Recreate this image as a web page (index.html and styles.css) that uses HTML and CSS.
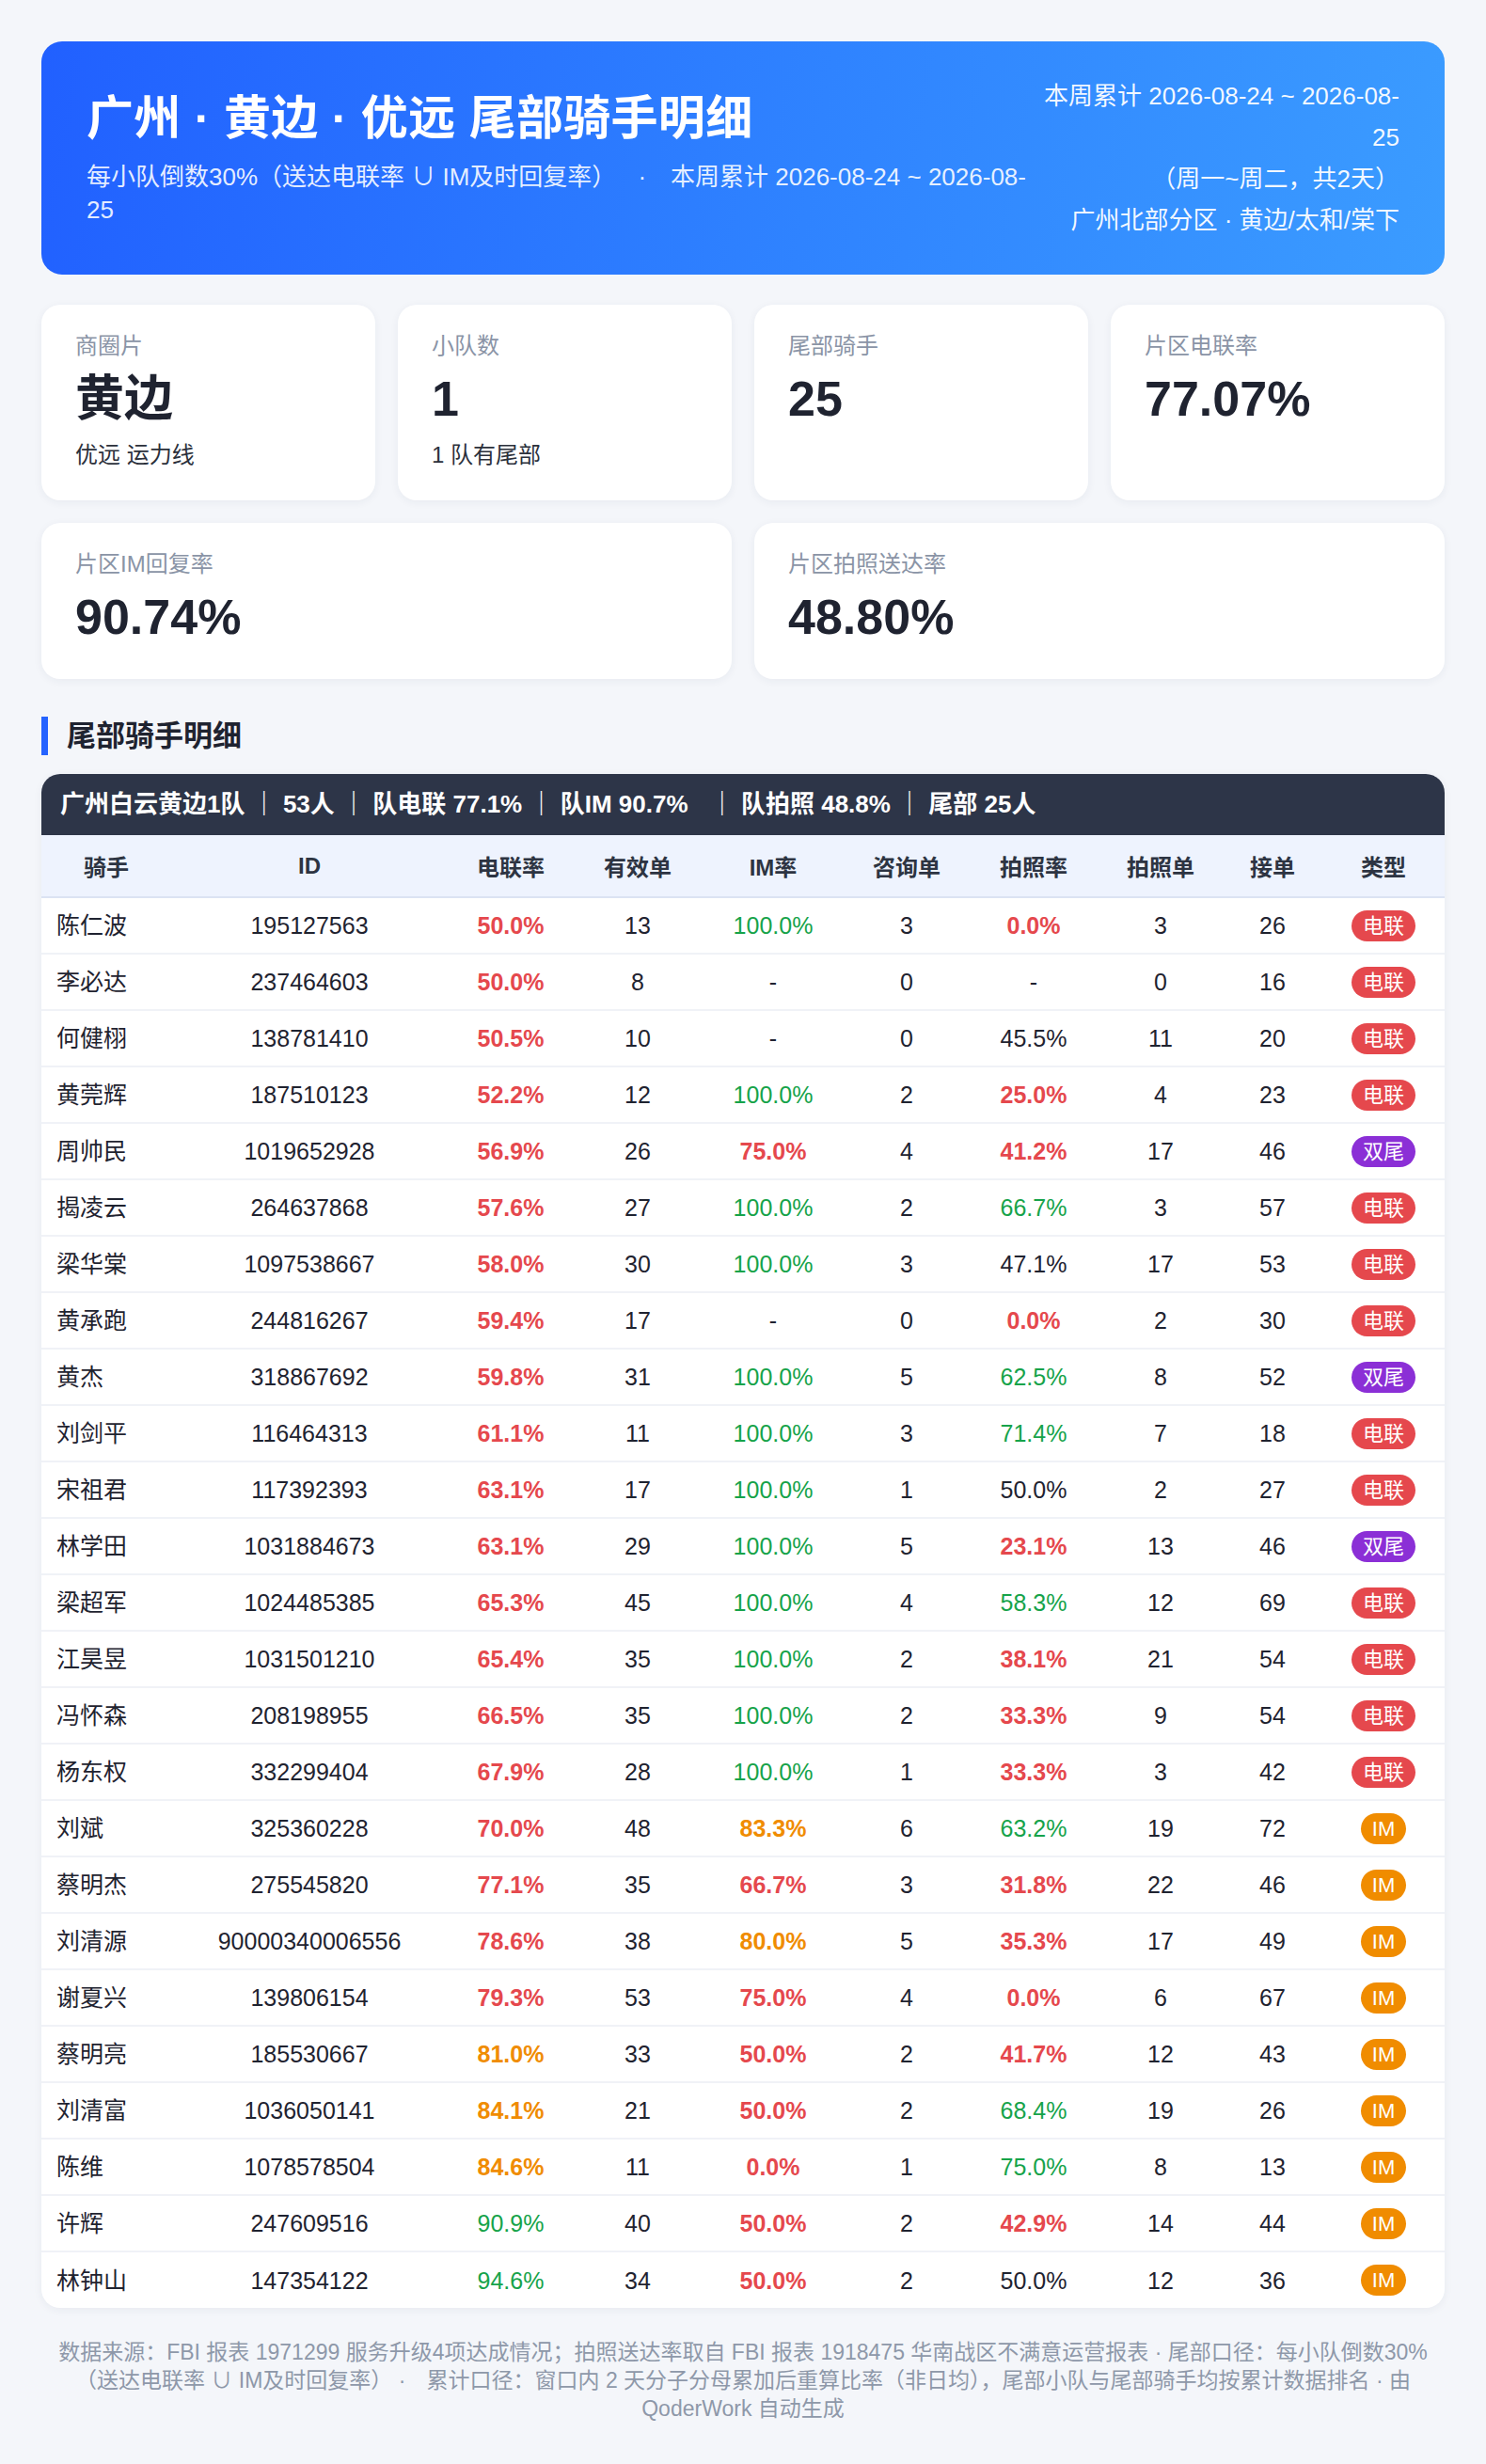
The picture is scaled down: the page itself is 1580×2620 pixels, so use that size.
FILE: index.html
```html
<!DOCTYPE html>
<html lang="zh-CN">
<head>
<meta charset="utf-8">
<title>广州 · 黄边 · 优远 尾部骑手明细</title>
<link rel="stylesheet" href="styles.css">
</head>
<body>
<div class="page">
  <header class="banner">
    <div class="banner-left">
      <h1 class="title">广州 · 黄边 · 优远 尾部骑手明细</h1>
      <p class="subtitle">每小队倒数30%（送达电联率 ∪ IM及时回复率）<span class="sep">·</span>本周累计 2026-08-24 ~ 2026-08-25</p>
    </div>
    <div class="banner-right">
      <div>本周累计 2026-08-24 ~ 2026-08-25</div>
      <div>（周一~周二，共2天）</div>
      <div>广州北部分区 · 黄边/太和/棠下</div>
    </div>
  </header>

  <section class="stats4">
    <div class="card">
      <div class="label">商圈片</div>
      <div class="value">黄边</div>
      <div class="sub">优远 运力线</div>
    </div>
    <div class="card">
      <div class="label">小队数</div>
      <div class="value">1</div>
      <div class="sub">1 队有尾部</div>
    </div>
    <div class="card">
      <div class="label">尾部骑手</div>
      <div class="value">25</div>
    </div>
    <div class="card">
      <div class="label">片区电联率</div>
      <div class="value">77.07%</div>
    </div>
  </section>
  <section class="stats2">
    <div class="card">
      <div class="label">片区IM回复率</div>
      <div class="value">90.74%</div>
    </div>
    <div class="card">
      <div class="label">片区拍照送达率</div>
      <div class="value">48.80%</div>
    </div>
  </section>

  <h2 class="section-title">尾部骑手明细</h2>

  <div class="table-card">
    <div class="team-bar">广州白云黄边1队 ｜ 53人 ｜ 队电联 77.1% ｜ 队IM 90.7%<span class="gap"></span> ｜ 队拍照 48.8% ｜ 尾部 25人</div>
    <table class="riders">
      <colgroup>
        <col class="c1"><col class="c2"><col class="c3"><col class="c4"><col class="c5">
        <col class="c6"><col class="c7"><col class="c8"><col class="c9"><col class="c10">
      </colgroup>
      <thead>
        <tr><th>骑手</th><th>ID</th><th>电联率</th><th>有效单</th><th>IM率</th><th>咨询单</th><th>拍照率</th><th>拍照单</th><th>接单</th><th>类型</th></tr>
      </thead>
      <tbody>
        <tr><td class="name">陈仁波</td><td>195127563</td><td class="r">50.0%</td><td>13</td><td class="g">100.0%</td><td>3</td><td class="r">0.0%</td><td>3</td><td>26</td><td><span class="badge tel">电联</span></td></tr>
        <tr><td class="name">李必达</td><td>237464603</td><td class="r">50.0%</td><td>8</td><td>-</td><td>0</td><td>-</td><td>0</td><td>16</td><td><span class="badge tel">电联</span></td></tr>
        <tr><td class="name">何健栩</td><td>138781410</td><td class="r">50.5%</td><td>10</td><td>-</td><td>0</td><td>45.5%</td><td>11</td><td>20</td><td><span class="badge tel">电联</span></td></tr>
        <tr><td class="name">黄莞辉</td><td>187510123</td><td class="r">52.2%</td><td>12</td><td class="g">100.0%</td><td>2</td><td class="r">25.0%</td><td>4</td><td>23</td><td><span class="badge tel">电联</span></td></tr>
        <tr><td class="name">周帅民</td><td>1019652928</td><td class="r">56.9%</td><td>26</td><td class="r">75.0%</td><td>4</td><td class="r">41.2%</td><td>17</td><td>46</td><td><span class="badge dual">双尾</span></td></tr>
        <tr><td class="name">揭凌云</td><td>264637868</td><td class="r">57.6%</td><td>27</td><td class="g">100.0%</td><td>2</td><td class="g">66.7%</td><td>3</td><td>57</td><td><span class="badge tel">电联</span></td></tr>
        <tr><td class="name">梁华棠</td><td>1097538667</td><td class="r">58.0%</td><td>30</td><td class="g">100.0%</td><td>3</td><td>47.1%</td><td>17</td><td>53</td><td><span class="badge tel">电联</span></td></tr>
        <tr><td class="name">黄承跑</td><td>244816267</td><td class="r">59.4%</td><td>17</td><td>-</td><td>0</td><td class="r">0.0%</td><td>2</td><td>30</td><td><span class="badge tel">电联</span></td></tr>
        <tr><td class="name">黄杰</td><td>318867692</td><td class="r">59.8%</td><td>31</td><td class="g">100.0%</td><td>5</td><td class="g">62.5%</td><td>8</td><td>52</td><td><span class="badge dual">双尾</span></td></tr>
        <tr><td class="name">刘剑平</td><td>116464313</td><td class="r">61.1%</td><td>11</td><td class="g">100.0%</td><td>3</td><td class="g">71.4%</td><td>7</td><td>18</td><td><span class="badge tel">电联</span></td></tr>
        <tr><td class="name">宋祖君</td><td>117392393</td><td class="r">63.1%</td><td>17</td><td class="g">100.0%</td><td>1</td><td>50.0%</td><td>2</td><td>27</td><td><span class="badge tel">电联</span></td></tr>
        <tr><td class="name">林学田</td><td>1031884673</td><td class="r">63.1%</td><td>29</td><td class="g">100.0%</td><td>5</td><td class="r">23.1%</td><td>13</td><td>46</td><td><span class="badge dual">双尾</span></td></tr>
        <tr><td class="name">梁超军</td><td>1024485385</td><td class="r">65.3%</td><td>45</td><td class="g">100.0%</td><td>4</td><td class="g">58.3%</td><td>12</td><td>69</td><td><span class="badge tel">电联</span></td></tr>
        <tr><td class="name">江昊昱</td><td>1031501210</td><td class="r">65.4%</td><td>35</td><td class="g">100.0%</td><td>2</td><td class="r">38.1%</td><td>21</td><td>54</td><td><span class="badge tel">电联</span></td></tr>
        <tr><td class="name">冯怀森</td><td>208198955</td><td class="r">66.5%</td><td>35</td><td class="g">100.0%</td><td>2</td><td class="r">33.3%</td><td>9</td><td>54</td><td><span class="badge tel">电联</span></td></tr>
        <tr><td class="name">杨东权</td><td>332299404</td><td class="r">67.9%</td><td>28</td><td class="g">100.0%</td><td>1</td><td class="r">33.3%</td><td>3</td><td>42</td><td><span class="badge tel">电联</span></td></tr>
        <tr><td class="name">刘斌</td><td>325360228</td><td class="r">70.0%</td><td>48</td><td class="o">83.3%</td><td>6</td><td class="g">63.2%</td><td>19</td><td>72</td><td><span class="badge im">IM</span></td></tr>
        <tr><td class="name">蔡明杰</td><td>275545820</td><td class="r">77.1%</td><td>35</td><td class="r">66.7%</td><td>3</td><td class="r">31.8%</td><td>22</td><td>46</td><td><span class="badge im">IM</span></td></tr>
        <tr><td class="name">刘清源</td><td>90000340006556</td><td class="r">78.6%</td><td>38</td><td class="o">80.0%</td><td>5</td><td class="r">35.3%</td><td>17</td><td>49</td><td><span class="badge im">IM</span></td></tr>
        <tr><td class="name">谢夏兴</td><td>139806154</td><td class="r">79.3%</td><td>53</td><td class="r">75.0%</td><td>4</td><td class="r">0.0%</td><td>6</td><td>67</td><td><span class="badge im">IM</span></td></tr>
        <tr><td class="name">蔡明亮</td><td>185530667</td><td class="o">81.0%</td><td>33</td><td class="r">50.0%</td><td>2</td><td class="r">41.7%</td><td>12</td><td>43</td><td><span class="badge im">IM</span></td></tr>
        <tr><td class="name">刘清富</td><td>1036050141</td><td class="o">84.1%</td><td>21</td><td class="r">50.0%</td><td>2</td><td class="g">68.4%</td><td>19</td><td>26</td><td><span class="badge im">IM</span></td></tr>
        <tr><td class="name">陈维</td><td>1078578504</td><td class="o">84.6%</td><td>11</td><td class="r">0.0%</td><td>1</td><td class="g">75.0%</td><td>8</td><td>13</td><td><span class="badge im">IM</span></td></tr>
        <tr><td class="name">许辉</td><td>247609516</td><td class="g">90.9%</td><td>40</td><td class="r">50.0%</td><td>2</td><td class="r">42.9%</td><td>14</td><td>44</td><td><span class="badge im">IM</span></td></tr>
        <tr><td class="name">林钟山</td><td>147354122</td><td class="g">94.6%</td><td>34</td><td class="r">50.0%</td><td>2</td><td>50.0%</td><td>12</td><td>36</td><td><span class="badge im">IM</span></td></tr>
      </tbody>
    </table>
  </div>

  <footer class="footer">数据来源：FBI 报表 1971299 服务升级4项达成情况；拍照送达率取自 FBI 报表 1918475 华南战区不满意运营报表 · 尾部口径：每小队倒数30%（送达电联率 ∪ IM及时回复率）<span class="sep2">·</span>累计口径：窗口内 2 天分子分母累加后重算比率（非日均），尾部小队与尾部骑手均按累计数据排名 · 由 QoderWork 自动生成</footer>
</div>
</body>
</html>
```

FILE: styles.css
```css
* { box-sizing: border-box; }

html, body {
  margin: 0;
  padding: 0;
  background: #f4f6fa;
}

body {
  font-family: "Liberation Sans", "Noto Sans CJK SC", sans-serif;
  color: #1f2430;
}

.page {
  padding: 44px;
}

/* Banner */
.banner {
  display: flex;
  justify-content: space-between;
  align-items: center;
  padding: 36px 48px;
  min-height: 248px;
  border-radius: 22px;
  background: linear-gradient(100deg, #2160ff 0%, #2f83ff 55%, #3b9cff 100%);
  color: #ffffff;
}

.banner-left {
  width: 1004px;
  flex: none;
}

.title {
  margin: 0;
  font-size: 50px;
  line-height: 60px;
  font-weight: 700;
  letter-spacing: 0.3px;
}

.subtitle {
  margin: 15px 0 0;
  font-size: 26px;
  line-height: 35px;
  color: rgba(255, 255, 255, 0.9);
}

.sep {
  margin: 0 26px 0 36px;
}

.banner-right {
  width: 390px;
  flex: none;
  text-align: right;
  font-size: 26px;
  line-height: 44px;
  color: rgba(255, 255, 255, 0.95);
}

/* Stat cards */
.stats4 {
  display: grid;
  grid-template-columns: repeat(4, 1fr);
  gap: 24px;
  margin-top: 32px;
}

.stats2 {
  display: grid;
  grid-template-columns: repeat(2, 1fr);
  gap: 24px;
  margin-top: 24px;
}

.stats2 .card {
  min-height: 166px;
}

.card {
  background: #ffffff;
  border-radius: 20px;
  padding: 28px 36px 30px;
  box-shadow: 0 2px 10px rgba(30, 45, 80, 0.06);
}

.label {
  font-size: 24px;
  line-height: 32px;
  color: #8a94a6;
}

.value {
  margin-top: 8px;
  font-size: 52px;
  line-height: 64px;
  font-weight: 700;
  color: #1f2330;
}

.sub {
  margin-top: 10px;
  font-size: 24px;
  line-height: 36px;
  color: #2b303b;
}

/* Section title */
.section-title {
  margin: 40px 0 20px;
  padding-left: 20px;
  border-left: 7px solid #2563ff;
  font-size: 31px;
  line-height: 41px;
  font-weight: 700;
  color: #1f2330;
}

/* Table card */
.table-card {
  background: #ffffff;
  border-radius: 20px;
  overflow: hidden;
  box-shadow: 0 2px 10px rgba(30, 45, 80, 0.06);
}

.team-bar {
  height: 65px;
  line-height: 65px;
  padding: 0 20px;
  background: #2d3548;
  color: #ffffff;
  font-size: 26px;
  font-weight: 700;
  white-space: nowrap;
}

.gap {
  display: inline-block;
  width: 16px;
}

.riders {
  width: 100%;
  border-collapse: collapse;
  table-layout: fixed;
}

.c1 { width: 138px; }
.c2 { width: 294px; }
.c3 { width: 134px; }
.c4 { width: 136px; }
.c5 { width: 152px; }
.c6 { width: 132px; }
.c7 { width: 138px; }
.c8 { width: 132px; }
.c9 { width: 106px; }
.c10 { width: 130px; }

.riders th {
  height: 66px;
  padding: 0;
  background: #eef3fe;
  border-bottom: 2px solid #dbe3f3;
  font-size: 24px;
  font-weight: 700;
  color: #2d3442;
  text-align: center;
}

.riders td {
  height: 60px;
  padding: 0;
  border-bottom: 2px solid #f0f2f7;
  font-size: 25px;
  line-height: 30px;
  text-align: center;
  vertical-align: middle;
  color: #1f2330;
  white-space: nowrap;
}

.riders tbody tr:last-child td {
  border-bottom: none;
}

.riders td.name {
  text-align: left;
  padding-left: 16px;
}

.r { color: #e5484d !important; font-weight: 700; }
.o { color: #f08c00 !important; font-weight: 700; }
.g { color: #16a34a !important; }

.badge {
  display: inline-block;
  height: 33px;
  line-height: 33px;
  padding: 0 12px;
  border-radius: 17px;
  font-size: 22px;
  color: #ffffff;
  vertical-align: middle;
}

.badge.tel { background: #e5484d; }
.badge.dual { background: #8b2fd6; }
.badge.im { background: #f08c00; }

/* Footer */
.footer {
  margin-top: 32px;
  text-align: center;
  font-size: 23px;
  line-height: 30px;
  color: #8e98a9;
}

.sep2 {
  margin: 0 22px 0 18px;
}
```
